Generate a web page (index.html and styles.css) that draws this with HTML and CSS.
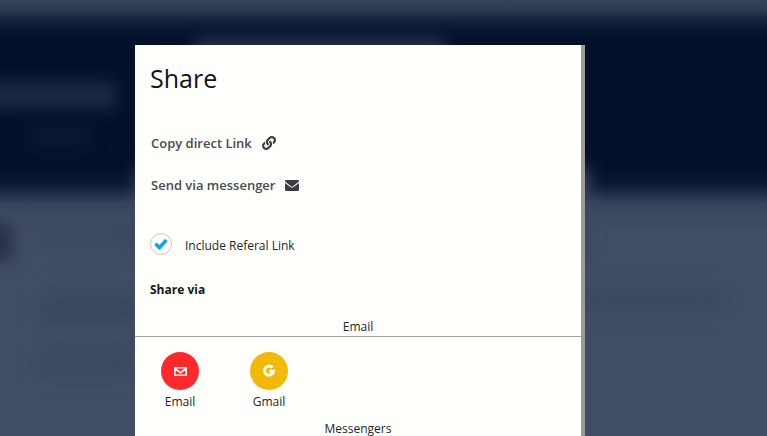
FILE: index.html
```html
<!DOCTYPE html>
<html lang="en">
<head>
<meta charset="utf-8">
<title>Share</title>
<link rel="stylesheet" href="styles.css">
</head>
<body>
<div class="backdrop">
  <span class="blob blob-tab"></span>
  <span class="blob blob-title"></span>
  <span class="blob blob-subtitle"></span>
  <span class="blob blob-panel"></span>
  <span class="blob blob-avatar"></span>
  <span class="blob blob-name"></span>
  <span class="blob blob-text"></span>
  <span class="blob blob-more"></span>
  <span class="blob blob-side"></span>
</div>
<main class="dialog">
  <h1 class="title">Share</h1>
  <ul class="actions">
    <li class="action"><span class="copy-label">Copy direct Link</span>
      <svg class="link-icon" viewBox="0 0 512 512"><path d="M326.612 185.391c59.747 59.809 58.927 155.698.36 214.59-.11.12-.24.25-.36.37l-67.2 67.2c-59.27 59.27-155.699 59.262-214.96 0-59.27-59.26-59.27-155.7 0-214.96l37.106-37.106c9.84-9.84 26.786-3.3 27.294 10.606.648 17.722 3.826 35.527 9.69 52.721 1.986 5.822.567 12.262-3.783 16.612l-13.087 13.087c-28.026 28.026-28.905 73.66-1.155 101.96 28.024 28.579 74.086 28.749 102.325.51l67.2-67.19c28.191-28.191 28.073-73.757 0-101.83-3.701-3.694-7.429-6.564-10.341-8.569a16.037 16.037 0 0 1-6.947-12.606c-.396-10.567 3.348-21.456 11.698-29.806l21.054-21.055c5.521-5.521 14.182-6.199 20.584-1.731a152.482 152.482 0 0 1 20.522 17.197zM467.547 44.449c-59.261-59.262-155.69-59.27-214.96 0l-67.2 67.2c-.12.12-.25.25-.36.37-58.566 58.892-59.387 154.781.36 214.59a152.454 152.454 0 0 0 20.521 17.196c6.402 4.468 15.064 3.789 20.584-1.731l21.054-21.055c8.35-8.35 12.094-19.239 11.698-29.806a16.037 16.037 0 0 0-6.947-12.606c-2.912-2.005-6.64-4.875-10.341-8.569-28.073-28.073-28.191-73.639 0-101.83l67.2-67.19c28.239-28.239 74.3-28.069 102.325.51 27.75 28.3 26.872 73.934-1.155 101.96l-13.087 13.087c-4.35 4.35-5.769 10.79-3.783 16.612 5.864 17.194 9.042 34.999 9.69 52.721.509 13.906 17.454 20.446 27.294 10.606l37.106-37.106c59.271-59.259 59.271-155.699.001-214.959z"/></svg></li>
    <li class="action"><span class="send-label">Send via messenger</span>
      <svg class="mail-icon" viewBox="0 0 14 11"><path d="M1.2 0h11.6C13.5 0 14 .5 14 1.1v.5L7.7 6.4q-.7.5-1.4 0L0 1.6v-.5C0 .5.5 0 1.2 0zM0 2.9l5.8 4.4q1.2.9 2.4 0L14 2.9v6.9c0 .7-.5 1.2-1.2 1.2H1.2C.5 11 0 10.5 0 9.800z"/></svg></li>
  </ul>
  <label class="referral">
    <span class="check"><svg viewBox="0 0 14 12"><path d="M1.500 5.800l3.900 3.900L12.400 2"/></svg></span>
    <span class="referral-label">Include Referal Link</span>
  </label>
  <h2 class="subtitle">Share via</h2>
  <h3 class="group group-email"><span>Email</span></h3>
  <div class="services">
    <div class="service">
      <span class="disc red"><svg class="envelope" viewBox="0 0 13 9"><path d="M.8.8h11.400v7.400H.8zM1.500 2l5 3.700L11.500 2"/></svg></span>
      <span class="service-name">Email</span>
    </div>
    <div class="service">
      <span class="disc yellow"><svg class="google" viewBox="0 0 14 14"><path d="M10.500 3.500A4.600 4.600 0 1 0 11.600 7.200H7.300"/></svg></span>
      <span class="service-name gmail-name">Gmail</span>
    </div>
  </div>
  <h3 class="group group-messengers"><span>Messengers</span></h3>
</main>
</body>
</html>
```
FILE: styles.css
```css
* { box-sizing: border-box; }
body {
  margin: 0;
  height: 436px;
  overflow: hidden;
  display: flow-root;
  font-family: "Open Sans", sans-serif;
  background: #414d64;
}
.backdrop {
  position: absolute;
  inset: 0;
  overflow: hidden;
  background: linear-gradient(#36445b 0, #303e56 7px, #1a2740 18px, #07152f 30px, #03112b 40px, #03112b 170px, #0a1933 183px, #1d2b45 193px, #35425b 203px, #3e4a62 214px, #414d64 235px);
}
.blob { position: absolute; filter: blur(8px); }
.blob-tab { left: 195px; top: 38px; width: 250px; height: 30px; background: #26334c; }
.blob-title { left: -20px; top: 82px; width: 136px; height: 27px; background: #1d2a42; }
.blob-subtitle { left: 30px; top: 124px; width: 62px; height: 24px; background: #0a1831; }
.blob-panel { left: 136px; top: 167px; width: 453px; height: 90px; background: #3b4860; }
.blob-avatar { left: -20px; top: 224px; width: 32px; height: 36px; background: #252f48; }
.blob-name { left: 40px; top: 225px; width: 100px; height: 22px; background: #3b485f; }
.blob-text { left: 40px; top: 294px; width: 100px; height: 30px; background: #3a485f; }
.blob-more { left: 40px; top: 348px; width: 90px; height: 28px; background: #3c4960; }
.blob-side { left: 585px; top: 289px; width: 135px; height: 22px; background: #3b485f; }

.dialog {
  position: relative;
  width: 450px;
  height: 391px;
  margin: 45px 0 0 135px;
  padding-top: 16px;
  overflow: hidden;
  background: #fffffc;
  border-right: 4px solid #9a9a9a;
  color: #22252b;
}
.title {
  margin: 0 0 27px 15px;
  font-size: 25px;
  line-height: 34px;
  font-weight: 500;
  color: #11121d;
}
.actions { list-style: none; margin: 0; padding: 0 0 0 16px; }
.action {
  display: flex;
  align-items: center;
  height: 42px;
  font-size: 13px;
  font-weight: 600;
  color: #484b50;
}
.link-icon { width: 14px; height: 14px; margin-left: 12px; fill: #393c43; }
.mail-icon { width: 14px; height: 11px; margin-left: 12px; fill: #393c43; }
.copy-label { width: 99px; white-space: nowrap; }
.send-label { width: 122px; white-space: nowrap; }
.referral {
  display: flex;
  gap: 13px;
  height: 22px;
  margin: 27px 0 25px 15px;
  font-size: 12px;
  line-height: 25px;
}
.check {
  display: flex;
  align-items: center;
  justify-content: center;
  width: 22px;
  height: 22px;
  border: 1px solid #cfc8c6;
  border-radius: 50%;
}
.check svg { width: 14px; height: 12px; fill: none; stroke: #139ff0; stroke-width: 3.4; }
.subtitle { margin: 0 0 17px 15px; font-size: 12px; line-height: 20px; font-weight: 700; color: #15161d; }
.group { margin: 0; font-size: 12px; line-height: 19px; font-weight: 400; text-align: center; }
.group-email { height: 20px; border-bottom: 1px solid #a4a3a4; }
.services { display: flex; gap: 29px; margin: 15px 0 7px 15px; }
.service { display: flex; flex-direction: column; align-items: center; width: 60px; font-size: 12px; line-height: 20px; }
.service-name { margin-top: 2px; font-weight: 500; }
.disc { display: flex; align-items: center; justify-content: center; width: 38px; height: 38px; border-radius: 50%; }
.red { background: #fd292b; }
.yellow { background: #f2b906; }
.envelope { width: 13px; height: 9px; fill: none; stroke: #fff2ef; stroke-width: 1.6; }
.google { width: 14px; height: 14px; fill: none; stroke: #fffdf3; stroke-width: 2.9; }
```
